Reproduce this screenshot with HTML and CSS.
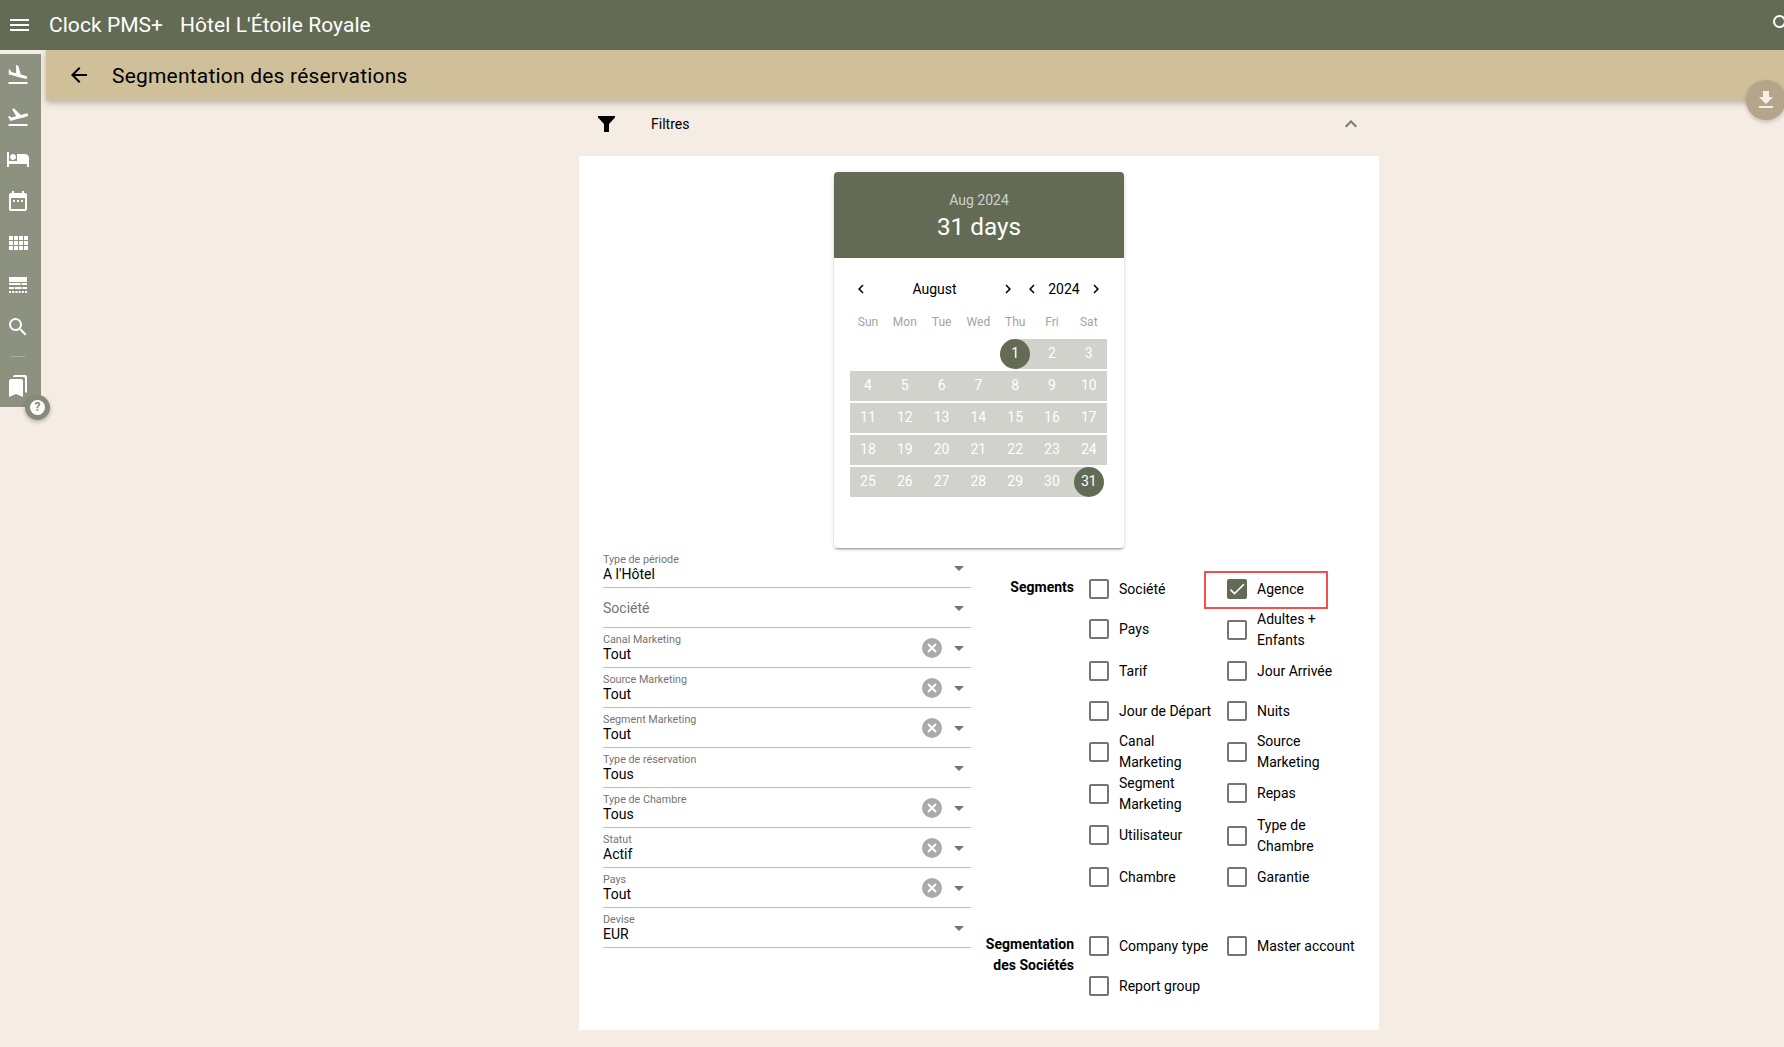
FILE: index.html
```html
<!DOCTYPE html>
<html lang="fr">

<head>
    <meta charset="UTF-8">
    <title>Segmentation des réservations</title>
    <link rel="stylesheet" href="styles.css">
</head>

<body>
    <header class="topbar">
        <div class="burger"><span></span><span></span><span></span></div>
        <span class="brand">Clock PMS+</span>
        <span class="hotel">Hôtel L'Étoile Royale</span>
        <svg class="top-search" viewBox="0 0 24 24"><path d="M15.5 14h-.79l-.28-.27A6.47 6.47 0 0 0 16 9.5 6.5 6.5 0 1 0 9.5 16c1.61 0 3.09-.59 4.23-1.57l.27.28v.79l5 4.99L20.49 19l-4.99-5zm-6 0C7.01 14 5 11.99 5 9.5S7.01 5 9.5 5 14 7.01 14 9.5 11.99 14 9.5 14z"/></svg>
    </header>

    <nav class="sidebar">
        <svg viewBox="0 0 24 24"><path d="M2.5 19h19v2h-19zm7.18-5.73l4.35 1.16 5.31 1.42c.8.21 1.62-.26 1.84-1.06.21-.8-.26-1.62-1.06-1.84l-5.31-1.42-2.76-9.02L10.12 2v8.28L5.15 8.95l-.93-2.32-1.45-.39v5.17l1.6.43 5.31 1.43z"/></svg>
        <svg viewBox="0 0 24 24"><path d="M2.5 19h19v2h-19zm19.57-9.36c-.21-.8-1.04-1.28-1.84-1.06L14.92 10l-6.9-6.43-1.93.51 4.14 7.17-4.97 1.33-1.97-1.54-1.45.39 1.82 3.16.77 1.33 1.6-.43 5.31-1.42 4.35-1.16L21 11.49c.81-.23 1.28-1.05 1.07-1.85z"/></svg>
        <svg viewBox="0 0 24 24"><path d="M7 13c1.66 0 3-1.34 3-3S8.66 7 7 7s-3 1.34-3 3 1.34 3 3 3zm12-6h-8v7H3V5H1v15h2v-3h18v3h2v-9c0-2.21-1.79-4-4-4z"/></svg>
        <svg viewBox="0 0 24 24"><path d="M9 11H7v2h2v-2zm4 0h-2v2h2v-2zm4 0h-2v2h2v-2zm2-7h-1V2h-2v2H8V2H6v2H5c-1.11 0-1.99.9-1.99 2L3 20c0 1.1.89 2 2 2h14c1.1 0 2-.9 2-2V6c0-1.1-.9-2-2-2zm0 16H5V9h14v11z"/></svg>
        <svg viewBox="0 0 24 24"><path d="M3 9h4V5H3v4zm0 5h4v-4H3v4zm5 0h4v-4H8v4zm5 0h4v-4h-4v4zM8 9h4V5H8v4zm5-4v4h4V5h-4zm5 9h4v-4h-4v4zM3 19h4v-4H3v4zm5 0h4v-4H8v4zm5 0h4v-4h-4v4zm5 0h4v-4h-4v4zm0-14v4h4V5h-4z"/></svg>
        <svg viewBox="0 0 24 24"><path d="M3 4h18v5H3zM3 10h11.6v2H3zM15.6 10H21v2h-5.4zM3 14h5v2H3zM8.8 14h6.8v2H8.8zM16.4 14H21v2h-4.6zM3 18h2v2H3zM6.2 18h2v2h-2zM9.4 18h2v2h-2zM12.6 18h2v2h-2zM15.8 18h2v2h-2zM19 18h2v2h-2z"/></svg>
        <svg viewBox="0 0 24 24"><path d="M15.5 14h-.79l-.28-.27A6.47 6.47 0 0 0 16 9.5 6.5 6.5 0 1 0 9.5 16c1.61 0 3.09-.59 4.23-1.57l.27.28v.79l5 4.99L20.49 19l-4.99-5zm-6 0C7.01 14 5 11.99 5 9.5S7.01 5 9.5 5 14 7.01 14 9.5 11.99 14 9.5 14z"/></svg>
        <div class="side-divider"></div>
        <svg viewBox="0 0 24 24"><path d="M19 18l2 1V3c0-1.1-.9-2-2-2H8.99C7.89 1 7 1.9 7 3h10c1.1 0 2 .9 2 2v13zM15 5H5c-1.1 0-2 .9-2 2v16l7-3 7 3V7c0-1.1-.9-2-2-2z"/></svg>
    </nav>
    <div class="help"><span>?</span></div>

    <div class="subbar">
        <svg class="back" viewBox="0 0 24 24"><path d="M20 11H7.83l5.59-5.59L12 4l-8 8 8 8 1.41-1.41L7.83 13H20v-2z"/></svg>
        <h1>Segmentation des réservations</h1>
    </div>
    <div class="fab">
        <svg viewBox="0 0 24 24"><path d="M19 9h-4V3H9v6H5l7 7 7-7zM5 18v2h14v-2H5z"/></svg>
    </div>

    <main class="content">
        <div class="filter-head">
            <svg class="funnel" viewBox="0 0 17 16"><path d="M0 0H17V1.5L11 8V16H6V8L0 1.5Z"/></svg>
            <span class="filter-title">Filtres</span>
            <svg class="collapse" viewBox="0 0 24 24"><path d="M12 8l-6 6 1.41 1.41L12 10.83l4.59 4.58L18 14z"/></svg>
        </div>

        <section class="panel">
            <div class="picker">
                <div class="picker-head">
                    <div class="picker-month">Aug 2024</div>
                    <div class="picker-count">31 days</div>
                </div>
                <div class="picker-nav">
                    <div class="nav-group month-group">
                        <svg viewBox="0 0 24 24"><path d="M15.41 7.41L14 6l-6 6 6 6 1.41-1.41L10.83 12z"/></svg>
                        <span>August</span>
                        <svg viewBox="0 0 24 24"><path d="M8.59 16.59L10 18l6-6-6-6-1.41 1.41L13.17 12z"/></svg>
                    </div>
                    <div class="nav-group year-group">
                        <svg viewBox="0 0 24 24"><path d="M15.41 7.41L14 6l-6 6 6 6 1.41-1.41L10.83 12z"/></svg>
                        <span>2024</span>
                        <svg viewBox="0 0 24 24"><path d="M8.59 16.59L10 18l6-6-6-6-1.41 1.41L13.17 12z"/></svg>
                    </div>
                </div>
                <div class="weekdays">
                    <span>Sun</span><span>Mon</span><span>Tue</span><span>Wed</span><span>Thu</span><span>Fri</span><span>Sat</span>
                </div>
                <div class="days">
                    <span class="blank"></span><span class="blank"></span><span class="blank"></span><span class="blank"></span>
                    <span class="day first"><b>1</b></span><span class="day">2</span><span class="day">3</span>
                    <span class="day">4</span><span class="day">5</span><span class="day">6</span><span class="day">7</span><span class="day">8</span><span class="day">9</span><span class="day">10</span>
                    <span class="day">11</span><span class="day">12</span><span class="day">13</span><span class="day">14</span><span class="day">15</span><span class="day">16</span><span class="day">17</span>
                    <span class="day">18</span><span class="day">19</span><span class="day">20</span><span class="day">21</span><span class="day">22</span><span class="day">23</span><span class="day">24</span>
                    <span class="day">25</span><span class="day">26</span><span class="day">27</span><span class="day">28</span><span class="day">29</span><span class="day">30</span><span class="day last"><b>31</b></span>
                </div>
            </div>

            <div class="form">
                <div class="fields">
                    <div class="field">
                        <div class="field-text"><label>Type de période</label><div class="value">A l'Hôtel</div></div>
                        <i class="arrow"></i>
                    </div>
                    <div class="field">
                        <div class="field-text"><div class="placeholder">Société</div></div>
                        <i class="arrow"></i>
                    </div>
                    <div class="field">
                        <div class="field-text"><label>Canal Marketing</label><div class="value">Tout</div></div>
                        <svg class="clear" viewBox="0 0 20 20"><circle cx="10" cy="10" r="10"/><path d="M6 6l8 8M14 6l-8 8"/></svg>
                        <i class="arrow"></i>
                    </div>
                    <div class="field">
                        <div class="field-text"><label>Source Marketing</label><div class="value">Tout</div></div>
                        <svg class="clear" viewBox="0 0 20 20"><circle cx="10" cy="10" r="10"/><path d="M6 6l8 8M14 6l-8 8"/></svg>
                        <i class="arrow"></i>
                    </div>
                    <div class="field">
                        <div class="field-text"><label>Segment Marketing</label><div class="value">Tout</div></div>
                        <svg class="clear" viewBox="0 0 20 20"><circle cx="10" cy="10" r="10"/><path d="M6 6l8 8M14 6l-8 8"/></svg>
                        <i class="arrow"></i>
                    </div>
                    <div class="field">
                        <div class="field-text"><label>Type de réservation</label><div class="value">Tous</div></div>
                        <i class="arrow"></i>
                    </div>
                    <div class="field">
                        <div class="field-text"><label>Type de Chambre</label><div class="value">Tous</div></div>
                        <svg class="clear" viewBox="0 0 20 20"><circle cx="10" cy="10" r="10"/><path d="M6 6l8 8M14 6l-8 8"/></svg>
                        <i class="arrow"></i>
                    </div>
                    <div class="field">
                        <div class="field-text"><label>Statut</label><div class="value">Actif</div></div>
                        <svg class="clear" viewBox="0 0 20 20"><circle cx="10" cy="10" r="10"/><path d="M6 6l8 8M14 6l-8 8"/></svg>
                        <i class="arrow"></i>
                    </div>
                    <div class="field">
                        <div class="field-text"><label>Pays</label><div class="value">Tout</div></div>
                        <svg class="clear" viewBox="0 0 20 20"><circle cx="10" cy="10" r="10"/><path d="M6 6l8 8M14 6l-8 8"/></svg>
                        <i class="arrow"></i>
                    </div>
                    <div class="field">
                        <div class="field-text"><label>Devise</label><div class="value">EUR</div></div>
                        <i class="arrow"></i>
                    </div>
                </div>

                <div class="segments">
                    <div class="seg-group">
                        <div class="seg-title">Segments</div>
                        <div class="seg-grid">
                            <div class="check"><i class="box"></i><span>Société</span></div>
                            <div class="check marked"><i class="box on"><svg viewBox="0 0 24 24"><path d="M9 16.17L4.83 12l-1.42 1.41L9 19 21 7l-1.41-1.41z"/></svg></i><span>Agence</span></div>
                            <div class="check up"><i class="box"></i><span>Pays</span></div>
                            <div class="check"><i class="box"></i><span>Adultes +<br>Enfants</span></div>
                            <div class="check"><i class="box"></i><span>Tarif</span></div>
                            <div class="check"><i class="box"></i><span>Jour Arrivée</span></div>
                            <div class="check"><i class="box"></i><span>Jour de Départ</span></div>
                            <div class="check"><i class="box"></i><span>Nuits</span></div>
                            <div class="check"><i class="box"></i><span>Canal<br>Marketing</span></div>
                            <div class="check"><i class="box"></i><span>Source<br>Marketing</span></div>
                            <div class="check"><i class="box"></i><span>Segment<br>Marketing</span></div>
                            <div class="check up"><i class="box"></i><span>Repas</span></div>
                            <div class="check up"><i class="box"></i><span>Utilisateur</span></div>
                            <div class="check"><i class="box"></i><span>Type de<br>Chambre</span></div>
                            <div class="check"><i class="box"></i><span>Chambre</span></div>
                            <div class="check"><i class="box"></i><span>Garantie</span></div>
                        </div>
                    </div>
                    <div class="seg-group">
                        <div class="seg-title">Segmentation des Sociétés</div>
                        <div class="seg-grid">
                            <div class="check"><i class="box"></i><span>Company type</span></div>
                            <div class="check"><i class="box"></i><span>Master account</span></div>
                            <div class="check"><i class="box"></i><span>Report group</span></div>
                        </div>
                    </div>
                </div>
            </div>
        </section>
    </main>
</body>

</html>
```

FILE: styles.css
```css
* {
    padding: 0;
    margin: 0;
    box-sizing: border-box;
}

html,
body {
    height: 100%;
    overflow: hidden;
}

body {
    background-color: #f5ece3;
    color: #000;
    font-family: Roboto, "Liberation Sans", sans-serif;
    font-size: 14px;
}

i {
    font-style: normal;
}

/* top bar */
.topbar {
    height: 50px;
    background-color: #636b55;
    color: #fff;
    display: flex;
    align-items: center;
    padding-left: 10px;
    font-size: 21px;
    letter-spacing: .05px;
    overflow: hidden;
}

.burger {
    width: 19px;
    display: flex;
    flex-direction: column;
    gap: 3px;
    margin-right: 20px;
}

.burger>span {
    height: 2px;
    background-color: #fff;
}

.brand {
    margin-right: 17px;
}

.top-search {
    width: 24px;
    height: 24px;
    fill: #fff;
    flex-shrink: 0;
    margin: -2px -10px 0 auto;
}

/* left rail */
.sidebar {
    position: absolute;
    left: 0;
    top: 54px;
    width: 41px;
    height: 353px;
    background-color: #8c9180;
    display: flex;
    flex-direction: column;
    align-items: flex-start;
    padding: 9px 0 0 6px;
    gap: 18px;
}

.sidebar>svg {
    width: 24px;
    height: 24px;
    fill: #fff;
    flex-shrink: 0;
}

.side-divider {
    width: 14px;
    height: 1px;
    margin: -1px 0 -1px 5px;
    background-color: #abaea0;
}

.help {
    position: absolute;
    left: 25px;
    top: 395px;
    width: 25px;
    height: 25px;
    border-radius: 50%;
    background-color: #858a7a;
    box-shadow: 0 2px 4px rgba(0, 0, 0, .25);
    display: flex;
    align-items: center;
    justify-content: center;
}

.help>span {
    width: 15px;
    height: 15px;
    border-radius: 50%;
    background-color: #fff;
    color: #858a7a;
    font-size: 12px;
    font-weight: 700;
    line-height: 15px;
    text-align: center;
}

/* page title */
.subbar {
    height: 50px;
    margin-left: 46px;
    background-color: #cfc09a;
    display: flex;
    align-items: center;
    padding-left: 21px;
    box-shadow: 0 3px 6px rgba(80, 70, 70, .35);
}

.back {
    width: 24px;
    height: 24px;
    margin-right: 21px;
}

.subbar>h1 {
    font-size: 21px;
    font-weight: 400;
    letter-spacing: .2px;
    padding-top: 1px;
}

.fab {
    position: absolute;
    left: 1746px;
    top: 80px;
    width: 40px;
    height: 40px;
    border-radius: 50%;
    background-color: #b5a58a;
    box-shadow: 0 2px 4px rgba(0, 0, 0, .2);
    display: flex;
    align-items: center;
    justify-content: center;
}

.fab>svg {
    width: 24px;
    height: 24px;
    fill: #f5f0e6;
}

/* filters */
.content {
    width: 800px;
    margin-left: 579px;
}

.filter-head {
    height: 56px;
    display: flex;
    align-items: center;
    padding: 0 0 8px 19px;
}

.funnel {
    width: 17px;
    height: 16px;
    margin-right: 36px;
}

.filter-title {
    flex-grow: 1;
}

.collapse {
    width: 24px;
    height: 24px;
    margin-right: 16px;
    fill: #757575;
}

.panel {
    height: 874px;
    background-color: #fff;
    padding-top: 16px;
}

/* date picker */
.picker {
    width: 290px;
    margin: 0 auto;
    padding-bottom: 51px;
    border-radius: 4px;
    background-color: #fff;
    box-shadow: 0 3px 1px -2px rgba(0, 0, 0, .2), 0 2px 2px 0 rgba(0, 0, 0, .14), 0 1px 5px 0 rgba(0, 0, 0, .12);
}

.picker-head {
    height: 86px;
    background-color: #636b55;
    border-radius: 4px 4px 0 0;
    color: #fff;
    text-align: center;
    padding-top: 19px;
}

.picker-month {
    line-height: 18px;
    color: rgba(255, 255, 255, .7);
}

.picker-count {
    font-size: 24.3px;
    line-height: 32px;
    margin-top: 2px;
}

.picker-nav {
    display: flex;
    justify-content: space-between;
    padding: 22px 19px 0 18px;
}

.nav-group {
    display: flex;
    align-items: center;
    justify-content: space-between;
    line-height: 18px;
}

.month-group {
    width: 165px;
}

.year-group {
    width: 82px;
}

.nav-group>svg {
    width: 18px;
    height: 18px;
}

.weekdays,
.days {
    display: grid;
    grid-template-columns: repeat(7, 36.8px);
    margin-left: 15.6px;
    text-align: center;
}

.weekdays {
    margin-top: 16px;
    line-height: 16px;
    font-size: 12px;
    color: #a3a3a3;
}

.days {
    margin-top: 9px;
    row-gap: 2px;
    grid-auto-rows: 30px;
    color: #fff;
    line-height: 29px;
}

.day {
    background-color: #d0d2cb;
}

.day.first {
    background: linear-gradient(to right, transparent 50%, #d0d2cb 50%);
}

.day.last {
    background: linear-gradient(to right, #d0d2cb 50%, transparent 50%);
}

.day>b {
    display: block;
    width: 30px;
    height: 30px;
    margin: 0 auto;
    border-radius: 50%;
    background-color: #636b55;
    font-weight: 400;
}

/* form */
.form {
    display: flex;
    padding-left: 24px;
}

.fields {
    width: 368px;
    flex-shrink: 0;
}

.field {
    height: 40px;
    border-bottom: 1px solid #bdbdbd;
    display: flex;
    align-items: center;
    padding-right: 7px;
}

.field-text {
    flex-grow: 1;
    align-self: flex-start;
    padding-top: 6px;
}

.field-text>label {
    display: block;
    font-size: 10.75px;
    line-height: 12px;
    color: #757575;
}

.value {
    line-height: 16px;
}

.placeholder {
    margin-top: 5px;
    line-height: 18px;
    color: #757575;
}

.clear {
    width: 20px;
    height: 20px;
    margin-right: 12px;
    fill: #aaa;
}

.clear>path {
    stroke: #fff;
    stroke-width: 2;
    fill: none;
}

.arrow {
    width: 0;
    height: 0;
    margin-top: 1px;
    border-left: 5px solid transparent;
    border-right: 5px solid transparent;
    border-top: 5px solid #757575;
}

.segments {
    margin-left: 8px;
    padding-top: 21px;
}

.seg-group {
    display: flex;
    gap: 15px;
    margin-bottom: 29px;
}

.seg-title {
    width: 95px;
    flex-shrink: 0;
    padding-top: 8px;
    text-align: right;
    font-weight: 700;
    line-height: 21px;
}

.seg-grid {
    display: grid;
    grid-template-columns: 138px 138px;
    align-items: center;
}

.check {
    min-height: 40px;
    display: flex;
    align-items: center;
    gap: 10px;
    line-height: 21px;
    position: relative;
}

.check.up {
    margin-top: -2px;
}

.box {
    width: 20px;
    height: 20px;
    flex-shrink: 0;
    border: 2px solid #757575;
    border-radius: 2px;
}

.box.on {
    background-color: #636b55;
    border-color: #636b55;
}

.box.on>svg {
    display: block;
    width: 20px;
    height: 20px;
    margin: -2px;
    fill: #fff;
}

.marked::after {
    content: "";
    box-sizing: border-box;
    position: absolute;
    left: -23px;
    top: 2px;
    width: 124px;
    height: 38px;
    border: 2px solid #f44f4f;
}
```
